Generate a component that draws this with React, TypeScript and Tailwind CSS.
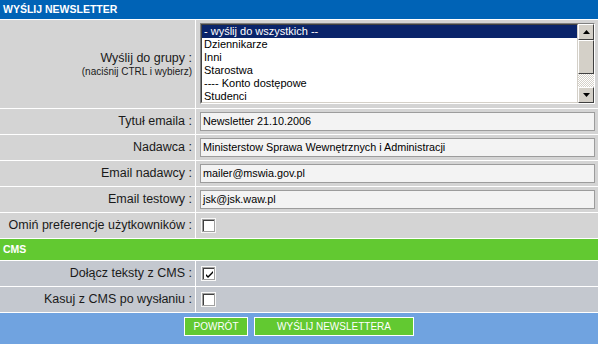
const font = { fontFamily: '"Liberation Sans", Arial, sans-serif' };

const groups = [
  '- wyślij do wszystkich --',
  'Dziennikarze',
  'Inni',
  'Starostwa',
  '---- Konto dostępowe',
  'Studenci',
];

const Label = ({ children }: { children: React.ReactNode }) => (
  <div className="w-[195px] shrink-0 flex items-center justify-end pr-[3px] text-[12.5px] text-[#1a1a1a]">
    {children}
  </div>
);

const TextRow = ({ label, value }: { label: string; value: string }) => (
  <div className="flex h-[25px] bg-[#d4d4d4]">
    <Label>{label} :</Label>
    <div className="w-px bg-white" />
    <div className="flex-1 flex items-center pl-[4px] pr-[3px]">
      <div className="w-full h-[19px] border border-[#9c9c9c] bg-[#f3f3f3] flex items-center px-[2px] text-[10.8px] text-black">
        {value}
      </div>
    </div>
  </div>
);

const Checkbox = ({ checked }: { checked?: boolean }) => (
  <div className="w-[15px] h-[15px] border border-[#f8f8f8] bg-[#a0a0a0] p-px">
    <div className="w-full h-full bg-white border-t border-l border-t-[#404040] border-l-[#404040] flex items-center justify-center">
      {checked && (
        <svg width="9" height="9" viewBox="0 0 9 9">
          <path d="M1 4 L3 6 L8 1 L8 3 L3 8 L1 6 Z" fill="#000" />
        </svg>
      )}
    </div>
  </div>
);

const CheckRow = ({ label, checked, bg }: { label: string; checked?: boolean; bg: string }) => (
  <div className={`flex h-[25px] ${bg}`}>
    <Label>{label} :</Label>
    <div className="w-px bg-white" />
    <div className="flex-1 flex items-center pl-[5px]">
      <Checkbox checked={checked} />
    </div>
  </div>
);

const ScrollBar = () => (
  <div className="w-[16px] flex flex-col bg-[repeating-conic-gradient(#d4d0c8_0%_25%,#ffffff_0%_50%)] bg-[length:2px_2px]">
    <div className="h-[16px] bg-[#d4d0c8] border border-t-white border-l-white border-r-[#404040] border-b-[#404040] flex items-center justify-center">
      <svg width="7" height="4" viewBox="0 0 7 4"><path d="M3.5 0 L7 4 L0 4 Z" fill="#000" /></svg>
    </div>
    <div className="h-[34px] bg-[#d4d0c8] border border-t-white border-l-white border-r-[#404040] border-b-[#404040]" />
    <div className="flex-1" />
    <div className="h-[16px] bg-[#d4d0c8] border border-t-white border-l-white border-r-[#404040] border-b-[#404040] flex items-center justify-center">
      <svg width="7" height="4" viewBox="0 0 7 4"><path d="M0 0 L7 0 L3.5 4 Z" fill="#000" /></svg>
    </div>
  </div>
);

export default function App() {
  return (
    <div className="w-[598px] h-[344px] bg-white flex flex-col gap-px" style={font}>
      <div className="h-[19px] bg-[#0063b6] flex items-center pl-[3px] text-white font-bold text-[10.5px]">
        WYŚLIJ NEWSLETTER
      </div>

      <div className="flex h-[88px] bg-[#d4d4d4]">
        <div className="w-[195px] shrink-0 flex flex-col items-end justify-center pr-[3px] text-[#1a1a1a]">
          <span className="text-[12.5px] leading-[15px]">Wyślij do grupy :</span>
          <span className="text-[10px] leading-[12px]">(naciśnij CTRL i wybierz)</span>
        </div>
        <div className="w-px bg-white" />
        <div className="flex-1 pl-[4px] pr-[3px] pt-[3px]">
          <div className="h-[81px] flex border border-t-[#808080] border-l-[#808080] border-r-white border-b-white bg-white">
            <div className="flex-1 border border-t-[#404040] border-l-[#404040] border-r-[#d4d0c8] border-b-[#d4d0c8] text-[11px] leading-[13px] text-black">
              {groups.map((g, i) => (
                <div key={g} className={i === 0 ? 'bg-[#0a246a] text-white pl-[2px]' : 'pl-[2px]'}>
                  {g}
                </div>
              ))}
            </div>
            <ScrollBar />
          </div>
        </div>
      </div>

      <TextRow label="Tytuł emaila" value="Newsletter 21.10.2006" />
      <TextRow label="Nadawca" value="Ministerstow Sprawa Wewnętrznych i Administracji" />
      <TextRow label="Email nadawcy" value="mailer@mswia.gov.pl" />
      <TextRow label="Email testowy" value="jsk@jsk.waw.pl" />
      <CheckRow label="Omiń preferencje użytkowników" bg="bg-[#d4d4d4]" />

      <div className="h-[21px] bg-[#62c931] flex items-center pl-[3px] text-white font-bold text-[10.5px]">
        CMS
      </div>

      <CheckRow label="Dołącz teksty z CMS" checked bg="bg-[#c4c8cf]" />
      <CheckRow label="Kasuj z CMS po wysłaniu" bg="bg-[#c4c8cf]" />

      <div className="flex-1 bg-[#70a3e0] flex items-start justify-center gap-[6px] pt-[4px]">
        <button className="w-[64px] h-[19px] bg-[#62c931] border border-white text-white text-[10px]">
          POWRÓT
        </button>
        <button className="w-[160px] h-[19px] bg-[#62c931] border border-white text-white text-[10px]">
          WYŚLIJ NEWSLETTERA
        </button>
      </div>
    </div>
  );
}
